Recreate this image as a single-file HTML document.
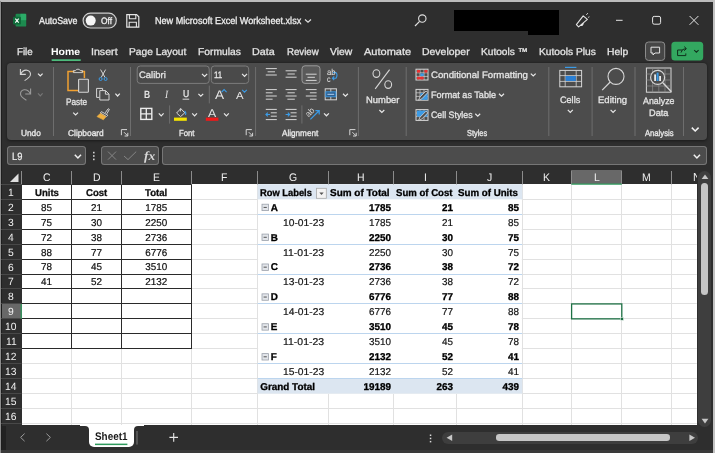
<!DOCTYPE html>
<html><head><meta charset="utf-8"><title>Excel</title>
<style>
html,body{margin:0;padding:0;}
body{width:715px;height:453px;overflow:hidden;background:#2e2e2e;position:relative;font-family:"Liberation Sans",sans-serif;}
.t{position:absolute;white-space:nowrap;transform-origin:0 50%;}
.b{position:absolute;}
svg{position:absolute;left:0;top:0;overflow:visible;}
#root{position:absolute;left:0;top:0;width:715px;height:453px;will-change:transform;text-rendering:geometricPrecision;}
</style></head><body><div id="root">
<div class="b" style="left:0px;top:0px;width:715px;height:2px;background:#bcbcbc;"></div>
<div class="b" style="left:0px;top:1px;width:1px;height:452px;background:#8c8c8c;"></div>
<div class="b" style="left:1px;top:2px;width:1px;height:451px;background:#1e1e1e;"></div>
<div class="b" style="left:712.5px;top:0px;width:3px;height:453px;background:#c3c3c3;"></div>
<div class="b" style="left:1px;top:450px;width:712px;height:3px;background:#3a3a3a;"></div>
<div class="b" style="left:7px;top:63.2px;width:700px;height:76.6px;background:#4c4c4c;border-radius:4px;box-shadow:0 0.5px 3px rgba(0,0,0,0.45);"></div>
<div class="b" style="left:7px;top:146px;width:79px;height:19px;background:#4c4c4c;border-radius:3.5px;box-shadow:inset 0 0 0 1px #767676;"></div>
<div class="b" style="left:101px;top:146px;width:58px;height:19px;background:#4c4c4c;border-radius:3.5px;box-shadow:inset 0 0 0 1px #767676;"></div>
<div class="b" style="left:162px;top:146px;width:544.5px;height:19px;background:#4c4c4c;border-radius:3.5px;box-shadow:inset 0 0 0 1px #767676;"></div>
<div class="b" style="left:2px;top:170px;width:694.8px;height:256px;background:#2e2e2e;"></div>
<div class="b" style="left:21.5px;top:184.4px;width:675.3px;height:241.1px;background:#ffffff;"></div>
<div class="b" style="left:571.4px;top:170px;width:50.3px;height:14.400000000000006px;background:#686868;"></div>
<div class="b" style="left:2px;top:303.92px;width:19.5px;height:14.94px;background:#686868;"></div>
<svg width="715" height="453" viewBox="0 0 715 453">
<rect x="257.6" y="184.40" width="264.7" height="14.94" fill="#dce6f1"/>
<rect x="257.6" y="378.62" width="264.7" height="14.94" fill="#dce6f1"/>
<line x1="22" y1="199.50" x2="696.8" y2="199.50" stroke="#e1e1e1" stroke-width="1"/>
<line x1="22" y1="214.50" x2="696.8" y2="214.50" stroke="#e1e1e1" stroke-width="1"/>
<line x1="22" y1="229.50" x2="696.8" y2="229.50" stroke="#e1e1e1" stroke-width="1"/>
<line x1="22" y1="244.50" x2="696.8" y2="244.50" stroke="#e1e1e1" stroke-width="1"/>
<line x1="22" y1="259.50" x2="696.8" y2="259.50" stroke="#e1e1e1" stroke-width="1"/>
<line x1="22" y1="274.50" x2="696.8" y2="274.50" stroke="#e1e1e1" stroke-width="1"/>
<line x1="22" y1="288.50" x2="696.8" y2="288.50" stroke="#e1e1e1" stroke-width="1"/>
<line x1="22" y1="303.50" x2="696.8" y2="303.50" stroke="#e1e1e1" stroke-width="1"/>
<line x1="22" y1="318.50" x2="696.8" y2="318.50" stroke="#e1e1e1" stroke-width="1"/>
<line x1="22" y1="333.50" x2="696.8" y2="333.50" stroke="#e1e1e1" stroke-width="1"/>
<line x1="22" y1="348.50" x2="696.8" y2="348.50" stroke="#e1e1e1" stroke-width="1"/>
<line x1="22" y1="363.50" x2="696.8" y2="363.50" stroke="#e1e1e1" stroke-width="1"/>
<line x1="22" y1="378.50" x2="696.8" y2="378.50" stroke="#e1e1e1" stroke-width="1"/>
<line x1="22" y1="393.50" x2="696.8" y2="393.50" stroke="#e1e1e1" stroke-width="1"/>
<line x1="22" y1="408.50" x2="696.8" y2="408.50" stroke="#e1e1e1" stroke-width="1"/>
<line x1="22" y1="423.50" x2="696.8" y2="423.50" stroke="#e1e1e1" stroke-width="1"/>
<line x1="71.5" y1="184.4" x2="71.5" y2="425" stroke="#e1e1e1" stroke-width="1"/>
<line x1="121.5" y1="184.4" x2="121.5" y2="425" stroke="#e1e1e1" stroke-width="1"/>
<line x1="191.5" y1="184.4" x2="191.5" y2="425" stroke="#e1e1e1" stroke-width="1"/>
<line x1="257.5" y1="184.4" x2="257.5" y2="425" stroke="#e1e1e1" stroke-width="1"/>
<line x1="328.5" y1="184.4" x2="328.5" y2="425" stroke="#e1e1e1" stroke-width="1"/>
<line x1="393.5" y1="184.4" x2="393.5" y2="425" stroke="#e1e1e1" stroke-width="1"/>
<line x1="456.5" y1="184.4" x2="456.5" y2="425" stroke="#e1e1e1" stroke-width="1"/>
<line x1="522.5" y1="184.4" x2="522.5" y2="425" stroke="#e1e1e1" stroke-width="1"/>
<line x1="571.5" y1="184.4" x2="571.5" y2="425" stroke="#e1e1e1" stroke-width="1"/>
<line x1="621.5" y1="184.4" x2="621.5" y2="425" stroke="#e1e1e1" stroke-width="1"/>
<line x1="671.5" y1="184.4" x2="671.5" y2="425" stroke="#e1e1e1" stroke-width="1"/>
<rect x="258.1" y="184.90" width="263.7" height="208.66" fill="#ffffff"/>
<rect x="257.6" y="184.40" width="264.7" height="14.94" fill="#dce6f1"/>
<rect x="257.6" y="378.62" width="264.7" height="14.94" fill="#dce6f1"/>
<line x1="257.6" y1="214.5" x2="522.3" y2="214.5" stroke="#bcd5ee" stroke-width="1"/>
<line x1="257.6" y1="244.5" x2="522.3" y2="244.5" stroke="#bcd5ee" stroke-width="1"/>
<line x1="257.6" y1="274.5" x2="522.3" y2="274.5" stroke="#bcd5ee" stroke-width="1"/>
<line x1="257.6" y1="303.5" x2="522.3" y2="303.5" stroke="#bcd5ee" stroke-width="1"/>
<line x1="257.6" y1="333.5" x2="522.3" y2="333.5" stroke="#bcd5ee" stroke-width="1"/>
<line x1="257.6" y1="363.5" x2="522.3" y2="363.5" stroke="#bcd5ee" stroke-width="1"/>
<line x1="257.6" y1="378.5" x2="522.3" y2="378.5" stroke="#bcd5ee" stroke-width="1"/>
<line x1="21.5" y1="184.5" x2="192" y2="184.5" stroke="#2a2a2a" stroke-width="1"/>
<line x1="21.5" y1="199.5" x2="192" y2="199.5" stroke="#2a2a2a" stroke-width="1"/>
<line x1="21.5" y1="214.5" x2="192" y2="214.5" stroke="#2a2a2a" stroke-width="1"/>
<line x1="21.5" y1="229.5" x2="192" y2="229.5" stroke="#2a2a2a" stroke-width="1"/>
<line x1="21.5" y1="244.5" x2="192" y2="244.5" stroke="#2a2a2a" stroke-width="1"/>
<line x1="21.5" y1="259.5" x2="192" y2="259.5" stroke="#2a2a2a" stroke-width="1"/>
<line x1="21.5" y1="274.5" x2="192" y2="274.5" stroke="#2a2a2a" stroke-width="1"/>
<line x1="21.5" y1="288.5" x2="192" y2="288.5" stroke="#2a2a2a" stroke-width="1"/>
<line x1="21.5" y1="303.5" x2="192" y2="303.5" stroke="#2a2a2a" stroke-width="1"/>
<line x1="21.5" y1="318.5" x2="192" y2="318.5" stroke="#2a2a2a" stroke-width="1"/>
<line x1="21.5" y1="333.5" x2="192" y2="333.5" stroke="#2a2a2a" stroke-width="1"/>
<line x1="21.5" y1="348.5" x2="192" y2="348.5" stroke="#2a2a2a" stroke-width="1"/>
<line x1="71.5" y1="184.4" x2="71.5" y2="349.0" stroke="#2a2a2a" stroke-width="1"/>
<line x1="121.5" y1="184.4" x2="121.5" y2="349.0" stroke="#2a2a2a" stroke-width="1"/>
<line x1="191.5" y1="184.4" x2="191.5" y2="349.0" stroke="#2a2a2a" stroke-width="1"/>
<line x1="71.5" y1="171" x2="71.5" y2="184.4" stroke="#8c8c8c" stroke-width="1"/>
<line x1="121.5" y1="171" x2="121.5" y2="184.4" stroke="#8c8c8c" stroke-width="1"/>
<line x1="191.5" y1="171" x2="191.5" y2="184.4" stroke="#8c8c8c" stroke-width="1"/>
<line x1="257.5" y1="171" x2="257.5" y2="184.4" stroke="#8c8c8c" stroke-width="1"/>
<line x1="328.5" y1="171" x2="328.5" y2="184.4" stroke="#8c8c8c" stroke-width="1"/>
<line x1="393.5" y1="171" x2="393.5" y2="184.4" stroke="#8c8c8c" stroke-width="1"/>
<line x1="456.5" y1="171" x2="456.5" y2="184.4" stroke="#8c8c8c" stroke-width="1"/>
<line x1="522.5" y1="171" x2="522.5" y2="184.4" stroke="#8c8c8c" stroke-width="1"/>
<line x1="571.5" y1="171" x2="571.5" y2="184.4" stroke="#8c8c8c" stroke-width="1"/>
<line x1="621.5" y1="171" x2="621.5" y2="184.4" stroke="#8c8c8c" stroke-width="1"/>
<line x1="671.5" y1="171" x2="671.5" y2="184.4" stroke="#8c8c8c" stroke-width="1"/>
<line x1="21.5" y1="171" x2="21.5" y2="184.4" stroke="#8c8c8c" stroke-width="1"/>
<line x1="1" y1="184.5" x2="21.5" y2="184.5" stroke="#484848" stroke-width="1"/>
<line x1="1" y1="199.5" x2="21.5" y2="199.5" stroke="#484848" stroke-width="1"/>
<line x1="1" y1="214.5" x2="21.5" y2="214.5" stroke="#484848" stroke-width="1"/>
<line x1="1" y1="229.5" x2="21.5" y2="229.5" stroke="#484848" stroke-width="1"/>
<line x1="1" y1="244.5" x2="21.5" y2="244.5" stroke="#484848" stroke-width="1"/>
<line x1="1" y1="259.5" x2="21.5" y2="259.5" stroke="#484848" stroke-width="1"/>
<line x1="1" y1="274.5" x2="21.5" y2="274.5" stroke="#484848" stroke-width="1"/>
<line x1="1" y1="288.5" x2="21.5" y2="288.5" stroke="#484848" stroke-width="1"/>
<line x1="1" y1="303.5" x2="21.5" y2="303.5" stroke="#484848" stroke-width="1"/>
<line x1="1" y1="318.5" x2="21.5" y2="318.5" stroke="#484848" stroke-width="1"/>
<line x1="1" y1="333.5" x2="21.5" y2="333.5" stroke="#484848" stroke-width="1"/>
<line x1="1" y1="348.5" x2="21.5" y2="348.5" stroke="#484848" stroke-width="1"/>
<line x1="1" y1="363.5" x2="21.5" y2="363.5" stroke="#484848" stroke-width="1"/>
<line x1="1" y1="378.5" x2="21.5" y2="378.5" stroke="#484848" stroke-width="1"/>
<line x1="1" y1="393.5" x2="21.5" y2="393.5" stroke="#484848" stroke-width="1"/>
<line x1="1" y1="408.5" x2="21.5" y2="408.5" stroke="#484848" stroke-width="1"/>
<line x1="1" y1="423.5" x2="21.5" y2="423.5" stroke="#484848" stroke-width="1"/>
<line x1="21.2" y1="303.92" x2="21.2" y2="318.86" stroke="#2e9a5c" stroke-width="1.2"/>
<path d="M18.5 173.5 L18.5 182 L10 182 Z" fill="#e0e0e0"/>
<line x1="571.4" y1="184.1" x2="621.7" y2="184.1" stroke="#2e9a5c" stroke-width="1.4"/>
<rect x="571.6" y="303.92" width="50.2" height="14.94" fill="none" stroke="#1e7145" stroke-width="1.3"/>
<rect x="620.5" y="317.36" width="3" height="3" fill="#1e7145" stroke="#fff" stroke-width="0.5"/>
</svg>
<div class="t" style="left:42.73px;top:168px;font-size:11px;line-height:20px;height:20px;color:#f0f0f0;transform:scaleX(0.9500);">C</div>
<div class="t" style="left:92.68px;top:168px;font-size:11px;line-height:20px;height:20px;color:#f0f0f0;transform:scaleX(0.9500);">D</div>
<div class="t" style="left:152.88px;top:168px;font-size:11px;line-height:20px;height:20px;color:#f0f0f0;transform:scaleX(0.9500);">E</div>
<div class="t" style="left:221.24px;top:168px;font-size:11px;line-height:20px;height:20px;color:#f0f0f0;transform:scaleX(0.9500);">F</div>
<div class="t" style="left:288.78px;top:168px;font-size:11px;line-height:20px;height:20px;color:#f0f0f0;transform:scaleX(0.9500);">G</div>
<div class="t" style="left:357.23px;top:168px;font-size:11px;line-height:20px;height:20px;color:#f0f0f0;transform:scaleX(0.9500);">H</div>
<div class="t" style="left:423.55px;top:168px;font-size:11px;line-height:20px;height:20px;color:#f0f0f0;transform:scaleX(0.9500);">I</div>
<div class="t" style="left:486.59px;top:168px;font-size:11px;line-height:20px;height:20px;color:#f0f0f0;transform:scaleX(0.9500);">J</div>
<div class="t" style="left:543.38px;top:168px;font-size:11px;line-height:20px;height:20px;color:#f0f0f0;transform:scaleX(0.9500);">K</div>
<div class="t" style="left:593.64px;top:168px;font-size:11px;line-height:20px;height:20px;color:#f0f0f0;transform:scaleX(0.9500);">L</div>
<div class="t" style="left:642.34px;top:168px;font-size:11px;line-height:20px;height:20px;color:#f0f0f0;transform:scaleX(0.9500);">M</div>
<div class="t" style="left:8.15px;top:183px;font-size:10.5px;line-height:20px;height:20px;color:#f0f0f0;transform:scaleX(0.9800);">1</div>
<div class="t" style="left:8.15px;top:198px;font-size:10.5px;line-height:20px;height:20px;color:#f0f0f0;transform:scaleX(0.9800);">2</div>
<div class="t" style="left:8.15px;top:213px;font-size:10.5px;line-height:20px;height:20px;color:#f0f0f0;transform:scaleX(0.9800);">3</div>
<div class="t" style="left:8.15px;top:228px;font-size:10.5px;line-height:20px;height:20px;color:#f0f0f0;transform:scaleX(0.9800);">4</div>
<div class="t" style="left:8.15px;top:243px;font-size:10.5px;line-height:20px;height:20px;color:#f0f0f0;transform:scaleX(0.9800);">5</div>
<div class="t" style="left:8.15px;top:258px;font-size:10.5px;line-height:20px;height:20px;color:#f0f0f0;transform:scaleX(0.9800);">6</div>
<div class="t" style="left:8.15px;top:272px;font-size:10.5px;line-height:20px;height:20px;color:#f0f0f0;transform:scaleX(0.9800);">7</div>
<div class="t" style="left:8.15px;top:287px;font-size:10.5px;line-height:20px;height:20px;color:#f0f0f0;transform:scaleX(0.9800);">8</div>
<div class="t" style="left:8.15px;top:302px;font-size:10.5px;line-height:20px;height:20px;color:#f0f0f0;transform:scaleX(0.9800);">9</div>
<div class="t" style="left:5.27px;top:317px;font-size:10.5px;line-height:20px;height:20px;color:#f0f0f0;transform:scaleX(0.9800);">10</div>
<div class="t" style="left:5.67px;top:332px;font-size:10.5px;line-height:20px;height:20px;color:#f0f0f0;transform:scaleX(0.9800);">11</div>
<div class="t" style="left:5.27px;top:347px;font-size:10.5px;line-height:20px;height:20px;color:#f0f0f0;transform:scaleX(0.9800);">12</div>
<div class="t" style="left:5.27px;top:362px;font-size:10.5px;line-height:20px;height:20px;color:#f0f0f0;transform:scaleX(0.9800);">13</div>
<div class="t" style="left:5.27px;top:377px;font-size:10.5px;line-height:20px;height:20px;color:#f0f0f0;transform:scaleX(0.9800);">14</div>
<div class="t" style="left:5.27px;top:392px;font-size:10.5px;line-height:20px;height:20px;color:#f0f0f0;transform:scaleX(0.9800);">15</div>
<div class="t" style="left:5.27px;top:407px;font-size:10.5px;line-height:20px;height:20px;color:#f0f0f0;transform:scaleX(0.9800);">16</div>
<div class="t" style="left:34.53px;top:184px;font-size:9.9px;line-height:20px;height:20px;color:#111;transform:scaleX(0.9700);font-weight:bold;-webkit-text-stroke:0.3px #111;">Units</div>
<div class="t" style="left:85.81px;top:184px;font-size:9.9px;line-height:20px;height:20px;color:#111;transform:scaleX(0.9700);font-weight:bold;-webkit-text-stroke:0.3px #111;">Cost</div>
<div class="t" style="left:145.26px;top:184px;font-size:9.9px;line-height:20px;height:20px;color:#111;transform:scaleX(0.9700);font-weight:bold;-webkit-text-stroke:0.3px #111;">Total</div>
<div class="t" style="left:41.00px;top:199px;font-size:9.9px;line-height:20px;height:20px;color:#111;transform:scaleX(1.0000);-webkit-text-stroke:0.2px #111;">85</div>
<div class="t" style="left:90.95px;top:199px;font-size:9.9px;line-height:20px;height:20px;color:#111;transform:scaleX(1.0000);-webkit-text-stroke:0.2px #111;">21</div>
<div class="t" style="left:145.35px;top:199px;font-size:9.9px;line-height:20px;height:20px;color:#111;transform:scaleX(1.0000);-webkit-text-stroke:0.2px #111;">1785</div>
<div class="t" style="left:41.00px;top:214px;font-size:9.9px;line-height:20px;height:20px;color:#111;transform:scaleX(1.0000);-webkit-text-stroke:0.2px #111;">75</div>
<div class="t" style="left:90.95px;top:214px;font-size:9.9px;line-height:20px;height:20px;color:#111;transform:scaleX(1.0000);-webkit-text-stroke:0.2px #111;">30</div>
<div class="t" style="left:145.35px;top:214px;font-size:9.9px;line-height:20px;height:20px;color:#111;transform:scaleX(1.0000);-webkit-text-stroke:0.2px #111;">2250</div>
<div class="t" style="left:41.00px;top:229px;font-size:9.9px;line-height:20px;height:20px;color:#111;transform:scaleX(1.0000);-webkit-text-stroke:0.2px #111;">72</div>
<div class="t" style="left:90.95px;top:229px;font-size:9.9px;line-height:20px;height:20px;color:#111;transform:scaleX(1.0000);-webkit-text-stroke:0.2px #111;">38</div>
<div class="t" style="left:145.35px;top:229px;font-size:9.9px;line-height:20px;height:20px;color:#111;transform:scaleX(1.0000);-webkit-text-stroke:0.2px #111;">2736</div>
<div class="t" style="left:41.00px;top:244px;font-size:9.9px;line-height:20px;height:20px;color:#111;transform:scaleX(1.0000);-webkit-text-stroke:0.2px #111;">88</div>
<div class="t" style="left:90.95px;top:244px;font-size:9.9px;line-height:20px;height:20px;color:#111;transform:scaleX(1.0000);-webkit-text-stroke:0.2px #111;">77</div>
<div class="t" style="left:145.35px;top:244px;font-size:9.9px;line-height:20px;height:20px;color:#111;transform:scaleX(1.0000);-webkit-text-stroke:0.2px #111;">6776</div>
<div class="t" style="left:41.00px;top:258px;font-size:9.9px;line-height:20px;height:20px;color:#111;transform:scaleX(1.0000);-webkit-text-stroke:0.2px #111;">78</div>
<div class="t" style="left:90.95px;top:258px;font-size:9.9px;line-height:20px;height:20px;color:#111;transform:scaleX(1.0000);-webkit-text-stroke:0.2px #111;">45</div>
<div class="t" style="left:145.35px;top:258px;font-size:9.9px;line-height:20px;height:20px;color:#111;transform:scaleX(1.0000);-webkit-text-stroke:0.2px #111;">3510</div>
<div class="t" style="left:41.00px;top:273px;font-size:9.9px;line-height:20px;height:20px;color:#111;transform:scaleX(1.0000);-webkit-text-stroke:0.2px #111;">41</div>
<div class="t" style="left:90.95px;top:273px;font-size:9.9px;line-height:20px;height:20px;color:#111;transform:scaleX(1.0000);-webkit-text-stroke:0.2px #111;">52</div>
<div class="t" style="left:145.35px;top:273px;font-size:9.9px;line-height:20px;height:20px;color:#111;transform:scaleX(1.0000);-webkit-text-stroke:0.2px #111;">2132</div>
<div class="t" style="left:260.30px;top:184px;font-size:9.9px;line-height:20px;height:20px;color:#000;transform:scaleX(0.9458);font-weight:bold;-webkit-text-stroke:0.3px #000;">Row Labels</div>
<div class="t" style="left:330.30px;top:184px;font-size:9.9px;line-height:20px;height:20px;color:#000;transform:scaleX(1.0074);font-weight:bold;-webkit-text-stroke:0.3px #000;">Sum of Total</div>
<div class="t" style="left:396.00px;top:184px;font-size:9.9px;line-height:20px;height:20px;color:#000;transform:scaleX(0.9703);font-weight:bold;-webkit-text-stroke:0.3px #000;">Sum of Cost</div>
<div class="t" style="left:458.30px;top:184px;font-size:9.9px;line-height:20px;height:20px;color:#000;transform:scaleX(0.9840);font-weight:bold;-webkit-text-stroke:0.3px #000;">Sum of Units</div>
<div class="t" style="left:270.70px;top:199px;font-size:9.9px;line-height:20px;height:20px;color:#000;transform:scaleX(1.0000);font-weight:bold;-webkit-text-stroke:0.3px #000;">A</div>
<div class="t" style="left:282.50px;top:214px;font-size:9.9px;line-height:20px;height:20px;color:#151515;transform:scaleX(1.0405);-webkit-text-stroke:0.2px #151515;">10-01-23</div>
<div class="t" style="left:369.00px;top:199px;font-size:9.9px;line-height:20px;height:20px;color:#000;transform:scaleX(1.0000);font-weight:bold;-webkit-text-stroke:0.3px #000;">1785</div>
<div class="t" style="left:369.00px;top:214px;font-size:9.9px;line-height:20px;height:20px;color:#151515;transform:scaleX(1.0000);-webkit-text-stroke:0.2px #151515;">1785</div>
<div class="t" style="left:442.00px;top:199px;font-size:9.9px;line-height:20px;height:20px;color:#000;transform:scaleX(1.0000);font-weight:bold;-webkit-text-stroke:0.3px #000;">21</div>
<div class="t" style="left:442.00px;top:214px;font-size:9.9px;line-height:20px;height:20px;color:#151515;transform:scaleX(1.0000);-webkit-text-stroke:0.2px #151515;">21</div>
<div class="t" style="left:508.00px;top:199px;font-size:9.9px;line-height:20px;height:20px;color:#000;transform:scaleX(1.0000);font-weight:bold;-webkit-text-stroke:0.3px #000;">85</div>
<div class="t" style="left:508.00px;top:214px;font-size:9.9px;line-height:20px;height:20px;color:#151515;transform:scaleX(1.0000);-webkit-text-stroke:0.2px #151515;">85</div>
<div class="t" style="left:270.70px;top:229px;font-size:9.9px;line-height:20px;height:20px;color:#000;transform:scaleX(1.0000);font-weight:bold;-webkit-text-stroke:0.3px #000;">B</div>
<div class="t" style="left:282.50px;top:244px;font-size:9.9px;line-height:20px;height:20px;color:#151515;transform:scaleX(1.0589);-webkit-text-stroke:0.2px #151515;">11-01-23</div>
<div class="t" style="left:369.00px;top:229px;font-size:9.9px;line-height:20px;height:20px;color:#000;transform:scaleX(1.0000);font-weight:bold;-webkit-text-stroke:0.3px #000;">2250</div>
<div class="t" style="left:369.00px;top:244px;font-size:9.9px;line-height:20px;height:20px;color:#151515;transform:scaleX(1.0000);-webkit-text-stroke:0.2px #151515;">2250</div>
<div class="t" style="left:442.00px;top:229px;font-size:9.9px;line-height:20px;height:20px;color:#000;transform:scaleX(1.0000);font-weight:bold;-webkit-text-stroke:0.3px #000;">30</div>
<div class="t" style="left:442.00px;top:244px;font-size:9.9px;line-height:20px;height:20px;color:#151515;transform:scaleX(1.0000);-webkit-text-stroke:0.2px #151515;">30</div>
<div class="t" style="left:508.00px;top:229px;font-size:9.9px;line-height:20px;height:20px;color:#000;transform:scaleX(1.0000);font-weight:bold;-webkit-text-stroke:0.3px #000;">75</div>
<div class="t" style="left:508.00px;top:244px;font-size:9.9px;line-height:20px;height:20px;color:#151515;transform:scaleX(1.0000);-webkit-text-stroke:0.2px #151515;">75</div>
<div class="t" style="left:270.70px;top:258px;font-size:9.9px;line-height:20px;height:20px;color:#000;transform:scaleX(1.0000);font-weight:bold;-webkit-text-stroke:0.3px #000;">C</div>
<div class="t" style="left:282.50px;top:273px;font-size:9.9px;line-height:20px;height:20px;color:#151515;transform:scaleX(1.0405);-webkit-text-stroke:0.2px #151515;">13-01-23</div>
<div class="t" style="left:369.00px;top:258px;font-size:9.9px;line-height:20px;height:20px;color:#000;transform:scaleX(1.0000);font-weight:bold;-webkit-text-stroke:0.3px #000;">2736</div>
<div class="t" style="left:369.00px;top:273px;font-size:9.9px;line-height:20px;height:20px;color:#151515;transform:scaleX(1.0000);-webkit-text-stroke:0.2px #151515;">2736</div>
<div class="t" style="left:442.00px;top:258px;font-size:9.9px;line-height:20px;height:20px;color:#000;transform:scaleX(1.0000);font-weight:bold;-webkit-text-stroke:0.3px #000;">38</div>
<div class="t" style="left:442.00px;top:273px;font-size:9.9px;line-height:20px;height:20px;color:#151515;transform:scaleX(1.0000);-webkit-text-stroke:0.2px #151515;">38</div>
<div class="t" style="left:508.00px;top:258px;font-size:9.9px;line-height:20px;height:20px;color:#000;transform:scaleX(1.0000);font-weight:bold;-webkit-text-stroke:0.3px #000;">72</div>
<div class="t" style="left:508.00px;top:273px;font-size:9.9px;line-height:20px;height:20px;color:#151515;transform:scaleX(1.0000);-webkit-text-stroke:0.2px #151515;">72</div>
<div class="t" style="left:270.70px;top:288px;font-size:9.9px;line-height:20px;height:20px;color:#000;transform:scaleX(1.0000);font-weight:bold;-webkit-text-stroke:0.3px #000;">D</div>
<div class="t" style="left:282.50px;top:303px;font-size:9.9px;line-height:20px;height:20px;color:#151515;transform:scaleX(1.0405);-webkit-text-stroke:0.2px #151515;">14-01-23</div>
<div class="t" style="left:369.00px;top:288px;font-size:9.9px;line-height:20px;height:20px;color:#000;transform:scaleX(1.0000);font-weight:bold;-webkit-text-stroke:0.3px #000;">6776</div>
<div class="t" style="left:369.00px;top:303px;font-size:9.9px;line-height:20px;height:20px;color:#151515;transform:scaleX(1.0000);-webkit-text-stroke:0.2px #151515;">6776</div>
<div class="t" style="left:442.00px;top:288px;font-size:9.9px;line-height:20px;height:20px;color:#000;transform:scaleX(1.0000);font-weight:bold;-webkit-text-stroke:0.3px #000;">77</div>
<div class="t" style="left:442.00px;top:303px;font-size:9.9px;line-height:20px;height:20px;color:#151515;transform:scaleX(1.0000);-webkit-text-stroke:0.2px #151515;">77</div>
<div class="t" style="left:508.00px;top:288px;font-size:9.9px;line-height:20px;height:20px;color:#000;transform:scaleX(1.0000);font-weight:bold;-webkit-text-stroke:0.3px #000;">88</div>
<div class="t" style="left:508.00px;top:303px;font-size:9.9px;line-height:20px;height:20px;color:#151515;transform:scaleX(1.0000);-webkit-text-stroke:0.2px #151515;">88</div>
<div class="t" style="left:270.70px;top:318px;font-size:9.9px;line-height:20px;height:20px;color:#000;transform:scaleX(1.0000);font-weight:bold;-webkit-text-stroke:0.3px #000;">E</div>
<div class="t" style="left:282.50px;top:333px;font-size:9.9px;line-height:20px;height:20px;color:#151515;transform:scaleX(1.0589);-webkit-text-stroke:0.2px #151515;">11-01-23</div>
<div class="t" style="left:369.00px;top:318px;font-size:9.9px;line-height:20px;height:20px;color:#000;transform:scaleX(1.0000);font-weight:bold;-webkit-text-stroke:0.3px #000;">3510</div>
<div class="t" style="left:369.00px;top:333px;font-size:9.9px;line-height:20px;height:20px;color:#151515;transform:scaleX(1.0000);-webkit-text-stroke:0.2px #151515;">3510</div>
<div class="t" style="left:442.00px;top:318px;font-size:9.9px;line-height:20px;height:20px;color:#000;transform:scaleX(1.0000);font-weight:bold;-webkit-text-stroke:0.3px #000;">45</div>
<div class="t" style="left:442.00px;top:333px;font-size:9.9px;line-height:20px;height:20px;color:#151515;transform:scaleX(1.0000);-webkit-text-stroke:0.2px #151515;">45</div>
<div class="t" style="left:508.00px;top:318px;font-size:9.9px;line-height:20px;height:20px;color:#000;transform:scaleX(1.0000);font-weight:bold;-webkit-text-stroke:0.3px #000;">78</div>
<div class="t" style="left:508.00px;top:333px;font-size:9.9px;line-height:20px;height:20px;color:#151515;transform:scaleX(1.0000);-webkit-text-stroke:0.2px #151515;">78</div>
<div class="t" style="left:270.70px;top:348px;font-size:9.9px;line-height:20px;height:20px;color:#000;transform:scaleX(1.0000);font-weight:bold;-webkit-text-stroke:0.3px #000;">F</div>
<div class="t" style="left:282.50px;top:363px;font-size:9.9px;line-height:20px;height:20px;color:#151515;transform:scaleX(1.0405);-webkit-text-stroke:0.2px #151515;">15-01-23</div>
<div class="t" style="left:369.00px;top:348px;font-size:9.9px;line-height:20px;height:20px;color:#000;transform:scaleX(1.0000);font-weight:bold;-webkit-text-stroke:0.3px #000;">2132</div>
<div class="t" style="left:369.00px;top:363px;font-size:9.9px;line-height:20px;height:20px;color:#151515;transform:scaleX(1.0000);-webkit-text-stroke:0.2px #151515;">2132</div>
<div class="t" style="left:442.00px;top:348px;font-size:9.9px;line-height:20px;height:20px;color:#000;transform:scaleX(1.0000);font-weight:bold;-webkit-text-stroke:0.3px #000;">52</div>
<div class="t" style="left:442.00px;top:363px;font-size:9.9px;line-height:20px;height:20px;color:#151515;transform:scaleX(1.0000);-webkit-text-stroke:0.2px #151515;">52</div>
<div class="t" style="left:508.00px;top:348px;font-size:9.9px;line-height:20px;height:20px;color:#000;transform:scaleX(1.0000);font-weight:bold;-webkit-text-stroke:0.3px #000;">41</div>
<div class="t" style="left:508.00px;top:363px;font-size:9.9px;line-height:20px;height:20px;color:#151515;transform:scaleX(1.0000);-webkit-text-stroke:0.2px #151515;">41</div>
<div class="t" style="left:260.30px;top:378px;font-size:9.9px;line-height:20px;height:20px;color:#000;transform:scaleX(1.0000);font-weight:bold;-webkit-text-stroke:0.3px #000;">Grand Total</div>
<div class="t" style="left:363.56px;top:378px;font-size:9.9px;line-height:20px;height:20px;color:#000;transform:scaleX(1.0000);font-weight:bold;-webkit-text-stroke:0.3px #000;">19189</div>
<div class="t" style="left:436.50px;top:378px;font-size:9.9px;line-height:20px;height:20px;color:#000;transform:scaleX(1.0000);font-weight:bold;-webkit-text-stroke:0.3px #000;">263</div>
<div class="t" style="left:502.50px;top:378px;font-size:9.9px;line-height:20px;height:20px;color:#000;transform:scaleX(1.0000);font-weight:bold;-webkit-text-stroke:0.3px #000;">439</div>
<svg width="715" height="453" viewBox="0 0 715 453">
<rect x="262" y="204.21" width="6.4" height="6.4" fill="#e2e5ea" stroke="#9aa0aa" stroke-width="0.8"/>
<line x1="263.6" y1="207.41" x2="266.8" y2="207.41" stroke="#444" stroke-width="0.9"/>
<rect x="262" y="234.09" width="6.4" height="6.4" fill="#e2e5ea" stroke="#9aa0aa" stroke-width="0.8"/>
<line x1="263.6" y1="237.29" x2="266.8" y2="237.29" stroke="#444" stroke-width="0.9"/>
<rect x="262" y="263.97" width="6.4" height="6.4" fill="#e2e5ea" stroke="#9aa0aa" stroke-width="0.8"/>
<line x1="263.6" y1="267.17" x2="266.8" y2="267.17" stroke="#444" stroke-width="0.9"/>
<rect x="262" y="293.85" width="6.4" height="6.4" fill="#e2e5ea" stroke="#9aa0aa" stroke-width="0.8"/>
<line x1="263.6" y1="297.05" x2="266.8" y2="297.05" stroke="#444" stroke-width="0.9"/>
<rect x="262" y="323.73" width="6.4" height="6.4" fill="#e2e5ea" stroke="#9aa0aa" stroke-width="0.8"/>
<line x1="263.6" y1="326.93" x2="266.8" y2="326.93" stroke="#444" stroke-width="0.9"/>
<rect x="262" y="353.61" width="6.4" height="6.4" fill="#e2e5ea" stroke="#9aa0aa" stroke-width="0.8"/>
<line x1="263.6" y1="356.81" x2="266.8" y2="356.81" stroke="#444" stroke-width="0.9"/>
<rect x="316.5" y="188.3" width="9.8" height="10" fill="#f3f3f3" stroke="#a8a8a8" stroke-width="0.8"/>
<path d="M319.3 192.4 L323.7 192.4 L321.5 195 Z" fill="#555"/>
</svg>
<div class="b" style="left:454px;top:10px;width:105px;height:21px;background:#000;"></div>
<div class="b" style="left:528px;top:30px;width:31px;height:5px;background:#000;"></div>
<svg width="715" height="453" viewBox="0 0 715 453">
<rect x="15.6" y="13.8" width="10.6" height="12.8" rx="1.2" fill="#1d8a4f"/>
<rect x="20.4" y="13.8" width="5.8" height="6.4" fill="#2fb36d" opacity="0.8"/>
<rect x="13" y="16.8" width="8" height="7.6" rx="1" fill="#0f6b3a"/>
<path d="M15.3 18.6 L18.7 22.6 M18.7 18.6 L15.3 22.6" stroke="#fff" stroke-width="1.1"/>
<rect x="83.1" y="13.2" width="33.2" height="14.8" rx="7.4" fill="#444444" stroke="#d0d0d0" stroke-width="1.2"/>
<circle cx="90.7" cy="20.6" r="5" fill="#f6f6f6"/>
<path d="M126.8 14.6 H136.6 L138.8 16.8 V27.2 H126.8 Z" fill="none" stroke="#e6e6e6" stroke-width="1.2"/>
<path d="M129.4 14.8 V18.8 H135.8 V14.8 M129.2 27 V22.2 H136.4 V27" fill="none" stroke="#e6e6e6" stroke-width="1.1"/>
<path d="M305 19.5 L308 22.3 L311 19.5" fill="none" stroke="#e0e0e0" stroke-width="1.2"/>
<circle cx="422.3" cy="18.6" r="3.7" fill="none" stroke="#e0e0e0" stroke-width="1.1"/>
<path d="M419.6 21.4 L415 26" stroke="#e0e0e0" stroke-width="1.2"/>
<path d="M576.4 24.6 L583.2 15.9 L587.4 19.4 L578.6 26.8 Z M580.6 25.2 Q582.4 26.4 583.4 23" fill="none" stroke="#e6e6e6" stroke-width="1.1" stroke-linejoin="round"/>
<path d="M586.4 14.8 L587.8 13.2 M588.2 17.4 L589.4 16.8" stroke="#e6e6e6" stroke-width="1"/>
<path d="M616 20.3 H622.6" stroke="#e6e6e6" stroke-width="1"/>
<rect x="652.6" y="16.4" width="8" height="7.8" rx="1.6" fill="none" stroke="#e6e6e6" stroke-width="1"/>
<path d="M689.6 16 L698.4 24.8 M698.4 16 L689.6 24.8" stroke="#e6e6e6" stroke-width="1"/>
<rect x="51.4" y="59.2" width="29.6" height="1.7" rx="0.8" fill="#4dbb7c"/>
<rect x="645.5" y="42" width="19.2" height="18.4" rx="3" fill="#464646" stroke="#8c8c8c" stroke-width="1"/>
<path d="M651 47.2 H659.6 V53 H655 L653 55 V53 H651 Z" fill="none" stroke="#e6e6e6" stroke-width="1"/>
<rect x="671.4" y="41.8" width="31.8" height="18.7" rx="3.5" fill="#33a860"/>
<path d="M682.2 50 H677.6 V55.6 H685.8 V53.4 M681 52.6 Q681.6 48.6 686 48.6 M684.2 46.6 L686.4 48.6 L684.2 50.8" fill="none" stroke="#10301c" stroke-width="1"/>
<path d="M694.2 50.2 L696.4 52.2 L698.6 50.2" fill="none" stroke="#10301c" stroke-width="1.1"/>
</svg>
<div class="t" style="left:38.90px;top:12px;font-size:10px;line-height:20px;height:20px;color:#efefef;transform:scaleX(0.8853);-webkit-text-stroke:0.3px #efefef;">AutoSave</div>
<div class="t" style="left:100.80px;top:11px;font-size:9.3px;line-height:20px;height:20px;color:#efefef;transform:scaleX(0.8980);-webkit-text-stroke:0.3px #efefef;">Off</div>
<div class="t" style="left:154.60px;top:12px;font-size:10px;line-height:20px;height:20px;color:#efefef;transform:scaleX(0.9084);-webkit-text-stroke:0.3px #efefef;">New Microsoft Excel Worksheet.xlsx</div>
<div class="t" style="left:17.00px;top:43px;font-size:10px;line-height:20px;height:20px;color:#e4e4e4;transform:scaleX(0.9736);-webkit-text-stroke:0.3px #e4e4e4;">File</div>
<div class="t" style="left:51.40px;top:43px;font-size:10px;line-height:20px;height:20px;color:#ffffff;transform:scaleX(1.0499);font-weight:bold;">Home</div>
<div class="t" style="left:91.00px;top:43px;font-size:10px;line-height:20px;height:20px;color:#e4e4e4;transform:scaleX(1.0640);-webkit-text-stroke:0.3px #e4e4e4;">Insert</div>
<div class="t" style="left:129.40px;top:43px;font-size:10px;line-height:20px;height:20px;color:#e4e4e4;transform:scaleX(1.0216);-webkit-text-stroke:0.3px #e4e4e4;">Page Layout</div>
<div class="t" style="left:198.40px;top:43px;font-size:10px;line-height:20px;height:20px;color:#e4e4e4;transform:scaleX(1.0267);-webkit-text-stroke:0.3px #e4e4e4;">Formulas</div>
<div class="t" style="left:252.30px;top:43px;font-size:10px;line-height:20px;height:20px;color:#e4e4e4;transform:scaleX(1.0746);-webkit-text-stroke:0.3px #e4e4e4;">Data</div>
<div class="t" style="left:286.50px;top:43px;font-size:10px;line-height:20px;height:20px;color:#e4e4e4;transform:scaleX(0.9661);-webkit-text-stroke:0.3px #e4e4e4;">Review</div>
<div class="t" style="left:330.30px;top:43px;font-size:10px;line-height:20px;height:20px;color:#e4e4e4;transform:scaleX(1.0326);-webkit-text-stroke:0.3px #e4e4e4;">View</div>
<div class="t" style="left:364.00px;top:43px;font-size:10px;line-height:20px;height:20px;color:#e4e4e4;transform:scaleX(1.1001);-webkit-text-stroke:0.3px #e4e4e4;">Automate</div>
<div class="t" style="left:422.00px;top:43px;font-size:10px;line-height:20px;height:20px;color:#e4e4e4;transform:scaleX(1.0447);-webkit-text-stroke:0.3px #e4e4e4;">Developer</div>
<div class="t" style="left:481.00px;top:43px;font-size:10px;line-height:20px;height:20px;color:#e4e4e4;transform:scaleX(1.0146);-webkit-text-stroke:0.3px #e4e4e4;">Kutools ™</div>
<div class="t" style="left:539.20px;top:43px;font-size:10px;line-height:20px;height:20px;color:#e4e4e4;transform:scaleX(1.0223);-webkit-text-stroke:0.3px #e4e4e4;">Kutools Plus</div>
<div class="t" style="left:607.00px;top:43px;font-size:10px;line-height:20px;height:20px;color:#e4e4e4;transform:scaleX(1.0310);-webkit-text-stroke:0.3px #e4e4e4;">Help</div>
<div class="t" style="left:11.80px;top:147px;font-size:10.5px;line-height:20px;height:20px;color:#f0f0f0;transform:scaleX(0.8898);-webkit-text-stroke:0.2px #f0f0f0;">L9</div>
<svg width="715" height="453" viewBox="0 0 715 453">
<path d="M74.8 154.8 L77.9 158 L81 154.8" fill="none" stroke="#f0f0f0" stroke-width="1.5"/>
<rect x="93" y="151.79999999999998" width="1.6" height="1.6" fill="#d0d0d0"/>
<rect x="93" y="155.2" width="1.6" height="1.6" fill="#d0d0d0"/>
<rect x="93" y="158.6" width="1.6" height="1.6" fill="#d0d0d0"/>
<path d="M108 151.6 L116 159.6 M116 151.6 L108 159.6" stroke="#858585" stroke-width="1"/>
<path d="M124 156 L128 159.6 L136.2 151.6" fill="none" stroke="#858585" stroke-width="1"/>
<path d="M693.8 154.8 L696.9 158 L700 154.8" fill="none" stroke="#f0f0f0" stroke-width="1.5"/>
</svg>
<div class="t" style="left:144.00px;top:146px;font-size:12.5px;line-height:20px;height:20px;color:#d8d8d8;transform:scaleX(1.0731);font-weight:bold;font-style:italic;font-family:'Liberation Serif',serif;">fx</div>
<div class="b" style="left:2px;top:425.6px;width:3.5px;height:24.4px;background:#222222;"></div>
<div class="b" style="left:697.8px;top:170.6px;width:13.4px;height:256.5px;background:#3e3e3e;border-radius:6.7px;"></div>
<div class="b" style="left:701.2px;top:183px;width:7px;height:112px;background:#c6c6c6;border-radius:3.5px;"></div>
<div class="b" style="left:442px;top:431.6px;width:256px;height:12.2px;background:#3e3e3e;border-radius:6px;"></div>
<div class="b" style="left:496px;top:434.4px;width:174px;height:6.4px;background:#c6c6c6;border-radius:3.2px;"></div>
<div class="b" style="left:80px;top:425.2px;width:64px;height:6px;background:#ffffff;"></div>
<div class="b" style="left:5.5px;top:425.6px;width:83.5px;height:24.4px;background:#2e2e2e;border-radius:4px 4px 0 0;"></div>
<div class="b" style="left:134.4px;top:425.6px;width:300px;height:24.4px;background:#2e2e2e;border-radius:4px 0 0 0;"></div>
<div class="b" style="left:89px;top:425.2px;width:45.4px;height:22px;background:#ffffff;border-radius:0 0 5px 5px;"></div>
<div class="t" style="left:95.00px;top:427px;font-size:11px;line-height:20px;height:20px;color:#1a1a1a;transform:scaleX(0.9012);font-weight:bold;">Sheet1</div>
<svg width="715" height="453" viewBox="0 0 715 453">
<rect x="95" y="443.6" width="32.4" height="1.5" fill="#2e9a5c"/>
<path d="M24.6 433.6 L20.6 437.4 L24.6 441.2" fill="none" stroke="#9a9a9a" stroke-width="1"/>
<path d="M46.4 433.6 L50.4 437.4 L46.4 441.2" fill="none" stroke="#9a9a9a" stroke-width="1"/>
<line x1="137" y1="431" x2="137" y2="444.6" stroke="#7a7a7a" stroke-width="1"/>
<path d="M169.4 437.4 H178 M173.7 433.1 V441.7" stroke="#e6e6e6" stroke-width="1.1"/>
<rect x="429.8" y="434.5" width="1.5" height="1.5" fill="#d8d8d8"/>
<rect x="429.8" y="437.7" width="1.5" height="1.5" fill="#d8d8d8"/>
<rect x="429.8" y="440.90000000000003" width="1.5" height="1.5" fill="#d8d8d8"/>
<path d="M452.2 434.6 V441 L446.6 437.8 Z" fill="#c6c6c6"/>
<path d="M689.4 434.6 V441 L695 437.8 Z" fill="#c6c6c6"/>
<path d="M701.6 179 H708.4 L705 174.4 Z" fill="#c6c6c6"/>
<path d="M701.6 418.8 H708.4 L705 423.4 Z" fill="#c6c6c6"/>
</svg>
<svg width="715" height="453" viewBox="0 0 715 453">
<line x1="53.5" y1="67" x2="53.5" y2="136" stroke="#6e6e6e" stroke-width="1"/>
<line x1="130.5" y1="67" x2="130.5" y2="136" stroke="#6e6e6e" stroke-width="1"/>
<line x1="255.6" y1="67" x2="255.6" y2="136" stroke="#6e6e6e" stroke-width="1"/>
<line x1="358.4" y1="67" x2="358.4" y2="136" stroke="#6e6e6e" stroke-width="1"/>
<line x1="406.2" y1="67" x2="406.2" y2="136" stroke="#6e6e6e" stroke-width="1"/>
<line x1="548.8" y1="67" x2="548.8" y2="136" stroke="#6e6e6e" stroke-width="1"/>
<line x1="592.1" y1="67" x2="592.1" y2="136" stroke="#6e6e6e" stroke-width="1"/>
<line x1="635" y1="67" x2="635" y2="136" stroke="#6e6e6e" stroke-width="1"/>
<line x1="683.5" y1="67" x2="683.5" y2="136" stroke="#6e6e6e" stroke-width="1"/>
<path d="M20.4 69 V74.4 H25.8 M20.6 74.2 Q23 69.6 27 70.2 Q31 71.2 30.4 75 Q30 77.4 24.6 80.6" fill="none" stroke="#d6d6d6" stroke-width="1.1"/>
<path d="M38 73.6 L40.3 76 L42.6 73.6" fill="none" stroke="#e8e8e8" stroke-width="1.2"/>
<path d="M30.6 88.6 V94 H25.2 M30.4 93.8 Q28 89.2 24 89.8 Q20 90.8 20.6 94.6 Q21 97 26.4 100.2" fill="none" stroke="#9a9a9a" stroke-width="1.1"/>
<path d="M38 93.4 L40.3 95.8 L42.6 93.4" fill="none" stroke="#777" stroke-width="1.2"/>
<path d="M74.5 71.4 H68 V90.6 H78.5 M81.5 71.4 H84.4 V78" fill="none" stroke="#f0a030" stroke-width="1.5"/>
<path d="M73.4 72.6 V70.6 H75.6 Q76.2 69 78 69.2 Q79.6 69 80.2 70.6 H82.6 V72.6 Z" fill="none" stroke="#d6d6d6" stroke-width="0.9"/>
<rect x="78.6" y="79.2" width="9.8" height="13" rx="0.8" fill="#5a5a5a" stroke="#d6d6d6" stroke-width="1.1"/>
<path d="M73.2 112.6 L75.6 115 L78 112.6" fill="none" stroke="#e8e8e8" stroke-width="1.2"/>
<path d="M100.6 69.6 L105 77.4 M105.6 69.6 L101.2 77.4" stroke="#d6d6d6" stroke-width="1"/>
<circle cx="100.6" cy="79" r="1.5" fill="none" stroke="#3b9be6" stroke-width="1"/><circle cx="105.6" cy="79" r="1.5" fill="none" stroke="#3b9be6" stroke-width="1"/>
<path d="M99.4 97.4 H96.6 V88.4 H102.6 V90" fill="none" stroke="#d6d6d6" stroke-width="1"/>
<path d="M99.8 90.6 H105.6 L109 94 V100 H99.8 Z M105.4 90.8 V94.2 H108.8" fill="none" stroke="#d6d6d6" stroke-width="1"/>
<path d="M115.4 93.6 L117.6 96 L119.8 93.6" fill="none" stroke="#e8e8e8" stroke-width="1.2"/>
<path d="M105.2 112.8 L108 109 Q109 108.4 109.4 109.4 L106.8 113.8" fill="none" stroke="#d6d6d6" stroke-width="1"/>
<path d="M101.4 111.6 L107.8 115.2 L106.6 116.6 L100.4 113 Z" fill="none" stroke="#d6d6d6" stroke-width="0.9"/>
<path d="M100.2 113.4 L97 116.6 L103.4 119.8 L106 116.8 Z" fill="#f0b040" stroke="#f0b040" stroke-width="0.6"/>
<path d="M121.4 135.2 V129.6 H127.0" fill="none" stroke="#d6d6d6" stroke-width="1"/>
<path d="M124.0 132.2 L127.60000000000001 135.79999999999998 M127.80000000000001 132.79999999999998 V136.0 H124.60000000000001" fill="none" stroke="#d6d6d6" stroke-width="1"/>
<rect x="137.2" y="66" width="72" height="17.4" rx="3" fill="#4a4a4a" stroke="#7c7c7c" stroke-width="1"/>
<rect x="211.3" y="66" width="37.4" height="17.4" rx="3" fill="#4a4a4a" stroke="#7c7c7c" stroke-width="1"/>
<path d="M202 73.8 L204.6 76.4 L207.2 73.8" fill="none" stroke="#e8e8e8" stroke-width="1.2"/>
<path d="M242.1 73.8 L244.55 76.4 L247 73.8" fill="none" stroke="#e8e8e8" stroke-width="1.2"/>
<line x1="182.6" y1="99.2" x2="189.2" y2="99.2" stroke="#d6d6d6" stroke-width="1"/>
<path d="M198.4 93.8 L200.8 96.2 L203.2 93.8" fill="none" stroke="#e8e8e8" stroke-width="1.2"/>
<line x1="209.3" y1="85.6" x2="209.3" y2="103.4" stroke="#6e6e6e" stroke-width="1"/>
<path d="M221.6 92.2 L224.1 89.6 L226.6 92.2" fill="none" stroke="#3b9be6" stroke-width="1.1"/>
<path d="M242.2 89.8 L244.5 92.2 L246.8 89.8" fill="none" stroke="#3b9be6" stroke-width="1.1"/>
<rect x="140.8" y="108.4" width="11" height="11" fill="none" stroke="#ececec" stroke-width="1.4"/><path d="M146.3 108.4 V119.4 M140.8 113.9 H151.8" stroke="#ececec" stroke-width="1.3"/>
<path d="M158.8 113.4 L161.2 115.8 L163.6 113.4" fill="none" stroke="#e8e8e8" stroke-width="1.2"/>
<line x1="169.6" y1="105.4" x2="169.6" y2="123.6" stroke="#6e6e6e" stroke-width="1"/>
<path d="M176.6 113 L180.8 108.6 L184.8 112.8 L180.6 116.6 Z M180.4 108.4 V111.4" fill="none" stroke="#d6d6d6" stroke-width="1"/>
<path d="M184.6 111 Q186.6 113 185.4 115" fill="none" stroke="#3b9be6" stroke-width="1.1"/>
<rect x="174" y="117.6" width="12.8" height="3.2" fill="#f5e400"/>
<path d="M192.2 113.4 L194.6 115.8 L197 113.4" fill="none" stroke="#e8e8e8" stroke-width="1.2"/>
<rect x="205.8" y="117.6" width="12.6" height="3.2" fill="#f01818"/>
<path d="M224 113.4 L226.4 115.8 L228.8 113.4" fill="none" stroke="#e8e8e8" stroke-width="1.2"/>
<path d="M246.2 135.2 V129.6 H251.79999999999998" fill="none" stroke="#d6d6d6" stroke-width="1"/>
<path d="M248.79999999999998 132.2 L252.39999999999998 135.79999999999998 M252.6 132.79999999999998 V136.0 H249.39999999999998" fill="none" stroke="#d6d6d6" stroke-width="1"/>
<line x1="265.8" y1="68.6" x2="276.8" y2="68.6" stroke="#d6d6d6" stroke-width="1"/>
<line x1="267.6" y1="71.8" x2="275.0" y2="71.8" stroke="#d6d6d6" stroke-width="1"/>
<line x1="265.8" y1="75" x2="276.8" y2="75" stroke="#d6d6d6" stroke-width="1"/>
<line x1="285.6" y1="70.8" x2="296.6" y2="70.8" stroke="#d6d6d6" stroke-width="1"/>
<line x1="287.4" y1="74" x2="294.8" y2="74" stroke="#d6d6d6" stroke-width="1"/>
<line x1="285.6" y1="77.2" x2="296.6" y2="77.2" stroke="#d6d6d6" stroke-width="1"/>
<rect x="302" y="65.8" width="18" height="17.6" rx="3" fill="#5a5a5a" stroke="#9a9a9a" stroke-width="1"/>
<line x1="305.8" y1="74.2" x2="316.6" y2="74.2" stroke="#d6d6d6" stroke-width="1"/>
<line x1="307.5" y1="77.3" x2="314.9" y2="77.3" stroke="#d6d6d6" stroke-width="1"/>
<line x1="305.8" y1="80.4" x2="316.6" y2="80.4" stroke="#d6d6d6" stroke-width="1"/>
<line x1="265.8" y1="89.6" x2="276.8" y2="89.6" stroke="#d6d6d6" stroke-width="1"/>
<line x1="265.8" y1="92.8" x2="272.6" y2="92.8" stroke="#d6d6d6" stroke-width="1"/>
<line x1="265.8" y1="96" x2="276.8" y2="96" stroke="#d6d6d6" stroke-width="1"/>
<line x1="265.8" y1="99.2" x2="272.6" y2="99.2" stroke="#d6d6d6" stroke-width="1"/>
<line x1="285.6" y1="89.6" x2="296.6" y2="89.6" stroke="#d6d6d6" stroke-width="1"/>
<line x1="287.4" y1="92.8" x2="294.8" y2="92.8" stroke="#d6d6d6" stroke-width="1"/>
<line x1="285.6" y1="96" x2="296.6" y2="96" stroke="#d6d6d6" stroke-width="1"/>
<line x1="287.4" y1="99.2" x2="294.8" y2="99.2" stroke="#d6d6d6" stroke-width="1"/>
<line x1="305.8" y1="89.6" x2="316.6" y2="89.6" stroke="#d6d6d6" stroke-width="1"/>
<line x1="309.9" y1="92.8" x2="316.6" y2="92.8" stroke="#d6d6d6" stroke-width="1"/>
<line x1="305.8" y1="96" x2="316.6" y2="96" stroke="#d6d6d6" stroke-width="1"/>
<line x1="309.9" y1="99.2" x2="316.6" y2="99.2" stroke="#d6d6d6" stroke-width="1"/>
<line x1="265.8" y1="109.4" x2="276.8" y2="109.4" stroke="#d6d6d6" stroke-width="1"/>
<line x1="270.8" y1="112.8" x2="276.8" y2="112.8" stroke="#d6d6d6" stroke-width="1"/>
<line x1="270.8" y1="116.2" x2="276.8" y2="116.2" stroke="#d6d6d6" stroke-width="1"/>
<line x1="265.8" y1="119.6" x2="276.8" y2="119.6" stroke="#d6d6d6" stroke-width="1"/>
<line x1="285.6" y1="109.4" x2="296.6" y2="109.4" stroke="#d6d6d6" stroke-width="1"/>
<line x1="290.6" y1="112.8" x2="296.6" y2="112.8" stroke="#d6d6d6" stroke-width="1"/>
<line x1="290.6" y1="116.2" x2="296.6" y2="116.2" stroke="#d6d6d6" stroke-width="1"/>
<line x1="285.6" y1="119.6" x2="296.6" y2="119.6" stroke="#d6d6d6" stroke-width="1"/>
<path d="M270 114.5 H266 M267.8 112.6 L265.9 114.5 L267.8 116.4" fill="none" stroke="#3b9be6" stroke-width="1.1"/>
<path d="M285.6 114.5 H289.6 M287.8 112.6 L289.7 114.5 L287.8 116.4" fill="none" stroke="#3b9be6" stroke-width="1.1"/>
<line x1="301.9" y1="105.4" x2="301.9" y2="123.6" stroke="#6e6e6e" stroke-width="1"/>
<path d="M333 72.6 H336 Q338 74.6 336 78.2 H332.6 M334.2 76.4 L332.4 78.2 L334.2 80" fill="none" stroke="#3b9be6" stroke-width="1.1"/>
<rect x="325.2" y="88.8" width="11.2" height="11" fill="none" stroke="#d6d6d6" stroke-width="1"/>
<rect x="325.8" y="91.8" width="10" height="5" fill="#2f5f8f" stroke="#3b9be6" stroke-width="0.9"/>
<path d="M330.8 88.8 V91.6 M330.8 97 V99.8" stroke="#d6d6d6" stroke-width="0.9"/>
<path d="M327.4 94.3 H334.2" stroke="#bfe0ff" stroke-width="0.9"/>
<path d="M343 93.8 L345.45 96.2 L347.9 93.8" fill="none" stroke="#e8e8e8" stroke-width="1.2"/>
<path d="M310.4 119.4 L318.8 111 M315.4 110.6 H319.2 V114.4" fill="none" stroke="#3b9be6" stroke-width="1.2"/>
<path d="M324 113.4 L326.45 115.8 L328.9 113.4" fill="none" stroke="#e8e8e8" stroke-width="1.2"/>
<path d="M349.8 135.2 V129.6 H355.40000000000003" fill="none" stroke="#d6d6d6" stroke-width="1"/>
<path d="M352.40000000000003 132.2 L356.0 135.79999999999998 M356.2 132.79999999999998 V136.0 H353.0" fill="none" stroke="#d6d6d6" stroke-width="1"/>
<ellipse cx="376.4" cy="73.6" rx="3.4" ry="3.8" fill="none" stroke="#d6d6d6" stroke-width="1.1"/>
<ellipse cx="388.2" cy="84.6" rx="3.4" ry="3.8" fill="none" stroke="#d6d6d6" stroke-width="1.1"/>
<line x1="389.6" y1="69.6" x2="375.2" y2="88.8" stroke="#d6d6d6" stroke-width="1.1"/>
<path d="M379.4 110 L381.85 112.4 L384.3 110" fill="none" stroke="#e8e8e8" stroke-width="1.2"/>
<rect x="416" y="69.2" width="12" height="10.8" fill="none" stroke="#d6d6d6" stroke-width="1"/>
<path d="M416 72.8 H428 M416 76.4 H428 M420 69.2 V80 M424 69.2 V80" stroke="#d6d6d6" stroke-width="0.7"/>
<rect x="417" y="70" width="3" height="2.6" fill="#e83030"/><rect x="420.4" y="73.4" width="3.4" height="2.6" fill="#3b9be6"/><rect x="417" y="76.8" width="6.6" height="2.6" fill="#e83030"/><rect x="424.4" y="70" width="3" height="2.6" fill="#e83030"/>
<path d="M530.8 73.6 L533.25 76 L535.7 73.6" fill="none" stroke="#e8e8e8" stroke-width="1.2"/>
<rect x="416" y="89.4" width="12" height="10.8" fill="none" stroke="#d6d6d6" stroke-width="1"/>
<path d="M416 92.80000000000001 H428 M416 96.4 H428 M420 89.4 V100.2 M424 89.4 V100.2" stroke="#d6d6d6" stroke-width="0.7"/>
<rect x="416" y="109.6" width="12" height="10.8" fill="none" stroke="#d6d6d6" stroke-width="1"/>
<path d="M416 113.0 H428 M416 116.6 H428 M420 109.6 V120.39999999999999 M424 109.6 V120.39999999999999" stroke="#d6d6d6" stroke-width="0.7"/>
<rect x="420.4" y="93.2" width="7.2" height="6.6" fill="#3b9be6"/>
<rect x="417" y="110.6" width="10.4" height="6" fill="#3b9be6"/>
<path d="M418.4 100.4 L420 97.0 L426 91.0 L427.8 92.60000000000001 L421.8 98.80000000000001 Z" fill="#4c4c4c" stroke="#d6d6d6" stroke-width="0.8"/>
<path d="M418.4 120.6 L420 117.19999999999999 L426 111.19999999999999 L427.8 112.8 L421.8 119.0 Z" fill="#4c4c4c" stroke="#d6d6d6" stroke-width="0.8"/>
<path d="M499 93.8 L501.5 96.2 L504 93.8" fill="none" stroke="#e8e8e8" stroke-width="1.2"/>
<path d="M475.3 113.8 L477.75 116.2 L480.2 113.8" fill="none" stroke="#e8e8e8" stroke-width="1.2"/>
<path d="M565 67.4 H576.4" stroke="#3b9be6" stroke-width="1.2"/>
<rect x="559.8" y="70.4" width="21.8" height="16.4" fill="none" stroke="#d6d6d6" stroke-width="1"/>
<path d="M559.8 75.6 H581.6 M559.8 81.4 H581.6 M565.2 70.4 V86.8 M576.2 70.4 V86.8" stroke="#d6d6d6" stroke-width="0.8"/>
<rect x="565.6" y="76" width="10.2" height="5" fill="#2a7fd4"/>
<path d="M567.8 109.8 L570.3 112.4 L572.8 109.8" fill="none" stroke="#e8e8e8" stroke-width="1.2"/>
<circle cx="616" cy="76.4" r="8" fill="none" stroke="#d6d6d6" stroke-width="1.1"/>
<line x1="610.2" y1="82" x2="602.2" y2="90.2" stroke="#d6d6d6" stroke-width="1.2"/>
<path d="M610.6 109.8 L613.1 112.4 L615.6 109.8" fill="none" stroke="#e8e8e8" stroke-width="1.2"/>
<rect x="646.4" y="68" width="24.6" height="24.2" fill="none" stroke="#d6d6d6" stroke-width="1"/>
<path d="M646.4 74 H671 M646.4 80 H671 M646.4 86 H671 M652.6 68 V92.2 M658.8 68 V92.2 M665 68 V92.2" stroke="#8c8c8c" stroke-width="0.7"/>
<circle cx="657.6" cy="77.4" r="7" fill="#4c4c4c" stroke="#d6d6d6" stroke-width="1.2"/>
<rect x="654.2" y="74.4" width="1.8" height="6.6" fill="#e8e8e8"/><rect x="656.6" y="72.6" width="2" height="8.4" fill="#3b9be6"/><rect x="659.2" y="76" width="1.8" height="5" fill="#e8e8e8"/>
<line x1="662.8" y1="82.8" x2="671.4" y2="91.8" stroke="#d6d6d6" stroke-width="1.4"/>
<path d="M691.8 127.6 L695.2 131 L698.6 127.6" fill="none" stroke="#f2f2f2" stroke-width="1.5"/>
</svg>
<div class="t" style="left:21.20px;top:123px;font-size:8.7px;line-height:20px;height:20px;color:#e6e6e6;transform:scaleX(0.9542);-webkit-text-stroke:0.35px #e6e6e6;">Undo</div>
<div class="t" style="left:67.50px;top:123px;font-size:8.7px;line-height:20px;height:20px;color:#e6e6e6;transform:scaleX(0.9600);-webkit-text-stroke:0.35px #e6e6e6;">Clipboard</div>
<div class="t" style="left:179.00px;top:123px;font-size:8.7px;line-height:20px;height:20px;color:#e6e6e6;transform:scaleX(0.8921);-webkit-text-stroke:0.35px #e6e6e6;">Font</div>
<div class="t" style="left:282.30px;top:123px;font-size:8.7px;line-height:20px;height:20px;color:#e6e6e6;transform:scaleX(0.9372);-webkit-text-stroke:0.35px #e6e6e6;">Alignment</div>
<div class="t" style="left:466.90px;top:123px;font-size:8.7px;line-height:20px;height:20px;color:#e6e6e6;transform:scaleX(0.8485);-webkit-text-stroke:0.35px #e6e6e6;">Styles</div>
<div class="t" style="left:644.50px;top:123px;font-size:8.7px;line-height:20px;height:20px;color:#e6e6e6;transform:scaleX(0.8803);-webkit-text-stroke:0.35px #e6e6e6;">Analysis</div>
<div class="t" style="left:65.70px;top:92px;font-size:9.3px;line-height:20px;height:20px;color:#e4e4e4;transform:scaleX(0.8889);-webkit-text-stroke:0.3px #e4e4e4;">Paste</div>
<div class="t" style="left:139.10px;top:65px;font-size:9.3px;line-height:20px;height:20px;color:#e4e4e4;transform:scaleX(1.0158);-webkit-text-stroke:0.3px #e4e4e4;">Calibri</div>
<div class="t" style="left:213.70px;top:65px;font-size:9.3px;line-height:20px;height:20px;color:#e4e4e4;transform:scaleX(0.8519);-webkit-text-stroke:0.3px #e4e4e4;">11</div>
<div class="t" style="left:143.80px;top:85px;font-size:10.5px;line-height:20px;height:20px;color:#e4e4e4;transform:scaleX(0.8066);font-weight:bold;">B</div>
<div class="t" style="left:164.65px;top:85px;font-size:11px;line-height:20px;height:20px;color:#e4e4e4;transform:scaleX(0.8597);font-style:italic;font-family:'Liberation Serif',serif;">I</div>
<div class="t" style="left:182.80px;top:85px;font-size:9.8px;line-height:20px;height:20px;color:#e4e4e4;transform:scaleX(0.8779);-webkit-text-stroke:0.3px #e4e4e4;">U</div>
<div class="t" style="left:214.50px;top:85px;font-size:12.5px;line-height:20px;height:20px;color:#e4e4e4;transform:scaleX(1.0866);">A</div>
<div class="t" style="left:235.60px;top:87px;font-size:10.2px;line-height:20px;height:20px;color:#e4e4e4;transform:scaleX(1.1156);">A</div>
<div class="t" style="left:207.80px;top:104px;font-size:11.4px;line-height:20px;height:20px;color:#e4e4e4;transform:scaleX(1.0754);">A</div>
<div class="t" style="left:326.80px;top:62px;font-size:8.5px;line-height:20px;height:20px;color:#e6e6e6;transform:scaleX(0.9113);">ab</div>
<div class="t" style="left:326.80px;top:69px;font-size:8.5px;line-height:20px;height:20px;color:#e6e6e6;transform:scaleX(0.8471);">c</div>
<div class="t" style="left:365.70px;top:90px;font-size:9.3px;line-height:20px;height:20px;color:#e4e4e4;transform:scaleX(1.0129);-webkit-text-stroke:0.3px #e4e4e4;">Number</div>
<div class="t" style="left:431.30px;top:65px;font-size:9.3px;line-height:20px;height:20px;color:#e4e4e4;transform:scaleX(1.0369);-webkit-text-stroke:0.3px #e4e4e4;">Conditional Formatting</div>
<div class="t" style="left:431.30px;top:85px;font-size:9.3px;line-height:20px;height:20px;color:#e4e4e4;transform:scaleX(0.9784);-webkit-text-stroke:0.3px #e4e4e4;">Format as Table</div>
<div class="t" style="left:431.30px;top:105px;font-size:9.3px;line-height:20px;height:20px;color:#e4e4e4;transform:scaleX(0.9476);-webkit-text-stroke:0.3px #e4e4e4;">Cell Styles</div>
<div class="t" style="left:560.20px;top:90px;font-size:9.3px;line-height:20px;height:20px;color:#e4e4e4;transform:scaleX(0.9775);-webkit-text-stroke:0.3px #e4e4e4;">Cells</div>
<div class="t" style="left:598.40px;top:90px;font-size:9.3px;line-height:20px;height:20px;color:#e4e4e4;transform:scaleX(1.0243);-webkit-text-stroke:0.3px #e4e4e4;">Editing</div>
<div class="t" style="left:643.30px;top:91px;font-size:9.3px;line-height:20px;height:20px;color:#e4e4e4;transform:scaleX(0.9533);-webkit-text-stroke:0.3px #e4e4e4;">Analyze</div>
<div class="t" style="left:649.00px;top:103px;font-size:9.3px;line-height:20px;height:20px;color:#e4e4e4;transform:scaleX(0.9917);-webkit-text-stroke:0.3px #e4e4e4;">Data</div>
<div class="t" style="left:304.5px;top:107px;font-size:8.5px;line-height:10px;color:#d6d6d6;transform:rotate(-45deg);transform-origin:50% 50%;">ab</div>
<div class="b" style="left:690px;top:170px;width:6.7px;height:14px;overflow:hidden;"><div class="t" style="left:3.2px;top:-0.4px;font-size:11.5px;line-height:16px;color:#ececec;transform:scaleX(0.95);">N</div></div>
</div></body></html>
